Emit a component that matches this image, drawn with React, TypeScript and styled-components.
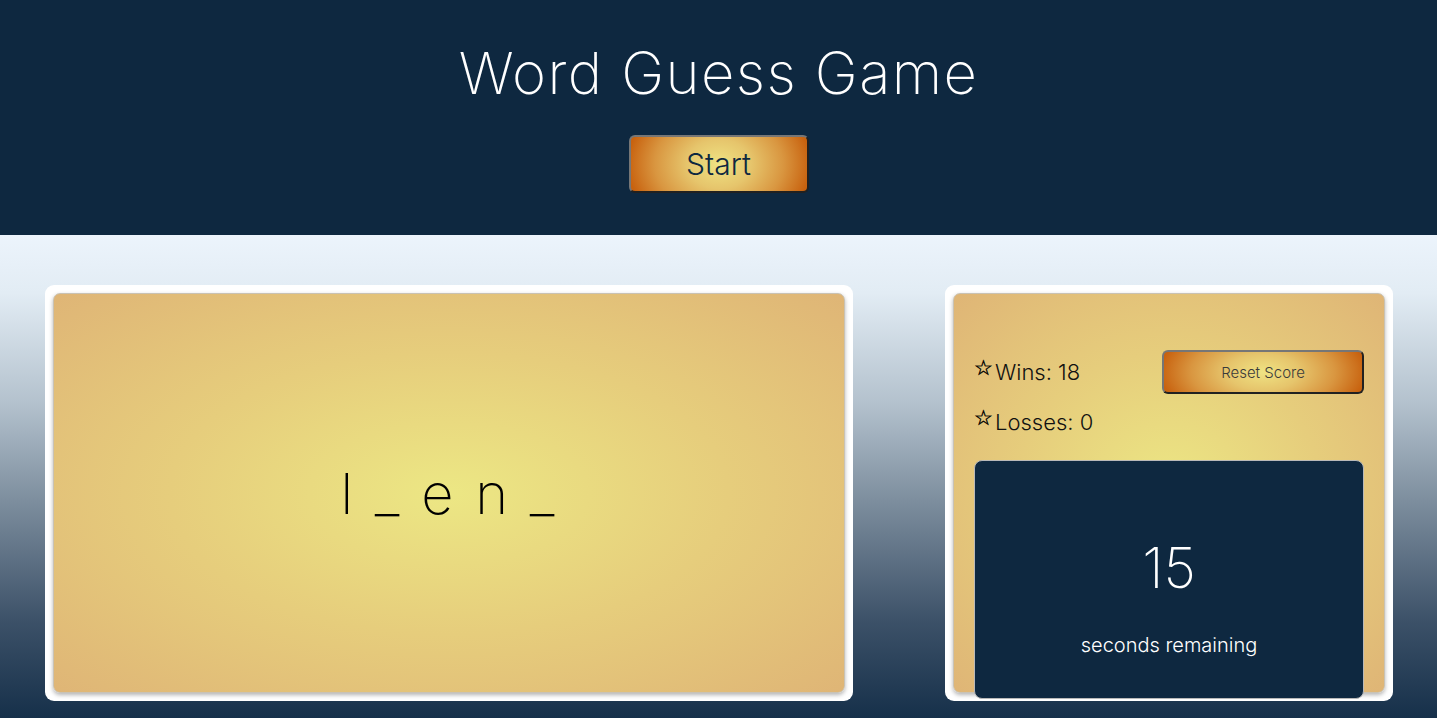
import React from "react";
import styled, { createGlobalStyle } from "styled-components";

const GlobalStyle = createGlobalStyle`
  html, body { margin: 0; padding: 0; }
  body {
    font-family: Inter, "Open Sans", sans-serif;
    background: #0e2840;
    overflow: hidden;
  }
`;

const Page = styled.div`
  width: 1437px;
  height: 718px;
  display: flex;
  flex-direction: column;
`;

const Header = styled.header`
  height: 235px;
  background: #0e2840;
  display: flex;
  flex-direction: column;
  align-items: center;
  box-sizing: border-box;
  padding-top: 36px;
`;

const Title = styled.h1`
  margin: 0;
  color: #ffffff;
  font-weight: 200;
  font-size: 58px;
  line-height: 74px;
  letter-spacing: 1.4px;
`;

const GoldButton = styled.button<{ $w: number; $h: number; $fs: number }>`
  width: ${(p) => p.$w}px;
  height: ${(p) => p.$h}px;
  border: 2px outset #767676;
  border-radius: 6px;
  background: radial-gradient(52% 130% at 50% 50%, #efe383 0%, #e6c56c 35%, #d99640 70%, #c8620f 100%);
  color: ${(p) => (p.$fs > 20 ? "#0e2840" : "#3a3a3a")};
  font-family: Inter, sans-serif;
  font-weight: 300;
  font-size: ${(p) => p.$fs}px;
  cursor: pointer;
  padding: 0;
`;

const StartButton = styled(GoldButton)`
  margin-top: 25px;
`;

const Main = styled.main`
  flex: 1;
  background: linear-gradient(
    to bottom,
    #ecf4fc 0%,
    #e2ecf4 12%,
    #b3c1cd 35%,
    #7d8e9e 55%,
    #3c5168 80%,
    #16304a 100%
  );
  display: flex;
  align-items: flex-start;
  padding: 50px 44px 0 45px;
  gap: 92px;
`;

const Frame = styled.section<{ $w: number }>`
  width: ${(p) => p.$w}px;
  height: 416px;
  box-sizing: border-box;
  background: #ffffff;
  border-radius: 9px;
  padding: 8px;
`;

const Panel = styled.div`
  height: 400px;
  box-sizing: border-box;
  border: 1px solid #c9c2b4;
  border-radius: 7px;
  box-shadow: 0 2px 4px rgba(0, 0, 0, 0.3);
  background: radial-gradient(ellipse at center, #ece784 0%, #e6cd7c 50%, #dfb576 100%);
`;

const WordPanel = styled(Panel)`
  display: flex;
  align-items: center;
  justify-content: center;
`;

const Word = styled.div`
  font-size: 56px;
  font-weight: 200;
  color: #000;
  white-space: pre;
  letter-spacing: 3px;
  margin-top: 2px;
  margin-left: 0;
`;

const StatsPanel = styled(Panel)`
  padding: 56px 20px 0 20px;
  display: flex;
  flex-direction: column;
`;

const StatRow = styled.div`
  display: flex;
  align-items: center;
  justify-content: space-between;
  height: 44px;
`;

const Stat = styled.div`
  display: flex;
  align-items: center;
  font-size: 22px;
  font-weight: 300;
  color: #111;
  line-height: 30px;
`;

const Star = styled.span`
  font-family: "DejaVu Sans", sans-serif;
  font-size: 21px;
  color: #000;
  margin-right: 2px;
  position: relative;
  top: -4px;
  -webkit-text-stroke: 0.4px #000;
`;

const LossRow = styled(Stat)`
  margin-top: 13px;
`;

const Timer = styled.div`
  margin-top: 23px;
  flex-shrink: 0;
  height: 239px;
  background: #0e2840;
  border: 1px solid #b9b9b9;
  border-radius: 8px;
  box-sizing: border-box;
  display: flex;
  flex-direction: column;
  align-items: center;
  color: #fff;
`;

const Count = styled.div`
  font-size: 56px;
  font-weight: 200;
  margin-top: 72px;
  line-height: 70px;
`;

const Remaining = styled.div`
  font-size: 20px;
  font-weight: 300;
  margin-top: 30px;
`;

export default function App() {
  return (
    <Page>
      <GlobalStyle />
      <Header>
        <Title>Word Guess Game</Title>
        <StartButton $w={180} $h={58} $fs={30}>
          Start
        </StartButton>
      </Header>
      <Main>
        <Frame $w={808}>
          <WordPanel>
            <Word>l _ e n _</Word>
          </WordPanel>
        </Frame>
        <Frame $w={448}>
          <StatsPanel>
            <StatRow>
              <Stat>
                <Star>☆</Star>Wins: 18
              </Stat>
              <GoldButton $w={202} $h={44} $fs={15}>
                Reset Score
              </GoldButton>
            </StatRow>
            <LossRow>
              <Star>☆</Star>Losses: 0
            </LossRow>
            <Timer>
              <Count>15</Count>
              <Remaining>seconds remaining</Remaining>
            </Timer>
          </StatsPanel>
        </Frame>
      </Main>
    </Page>
  );
}
